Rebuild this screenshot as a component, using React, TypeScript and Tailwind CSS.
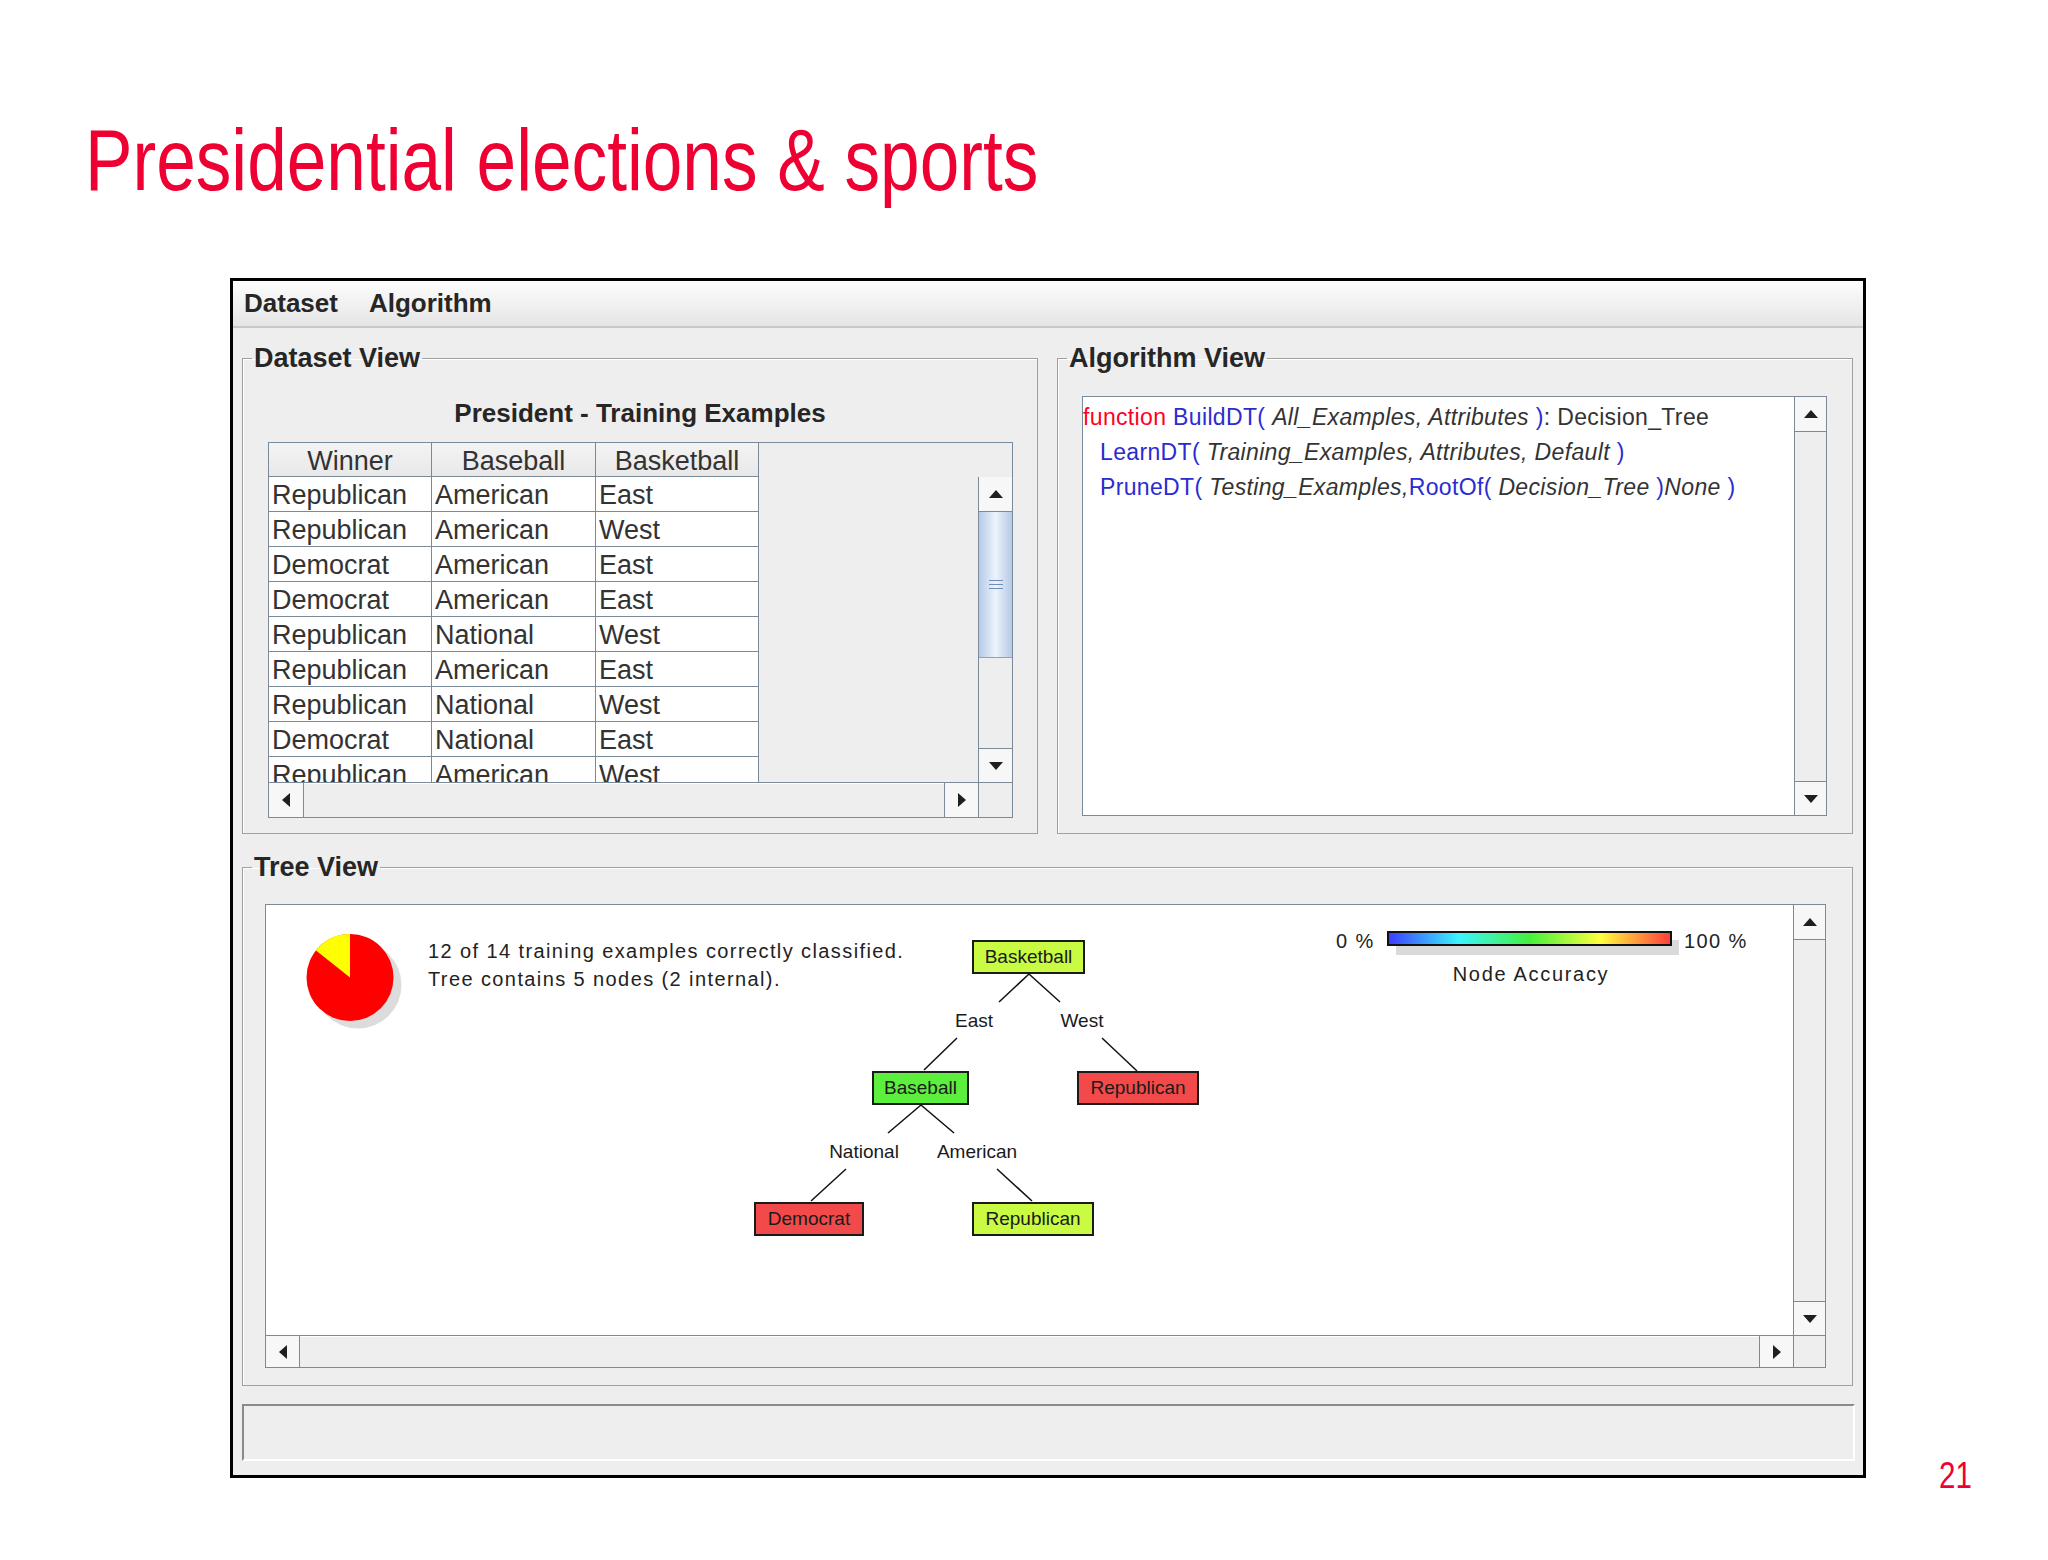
import React from "react";

type Dir = "up" | "down" | "left" | "right";

const rows = [
  ["Republican", "American", "East"],
  ["Republican", "American", "West"],
  ["Democrat", "American", "East"],
  ["Democrat", "American", "East"],
  ["Republican", "National", "West"],
  ["Republican", "American", "East"],
  ["Republican", "National", "West"],
  ["Democrat", "National", "East"],
  ["Republican", "American", "West"],
];

const colWidths = ["w-[163px]", "w-[164px]", "w-[163px]"];

function Arrow({ dir }: { dir: Dir }) {
  const vertical = dir === "up" || dir === "down";
  const pts = {
    up: "0,8 7,0 14,8",
    down: "0,0 14,0 7,8",
    left: "8,0 8,14 0,7",
    right: "0,0 8,7 0,14",
  }[dir];
  return (
    <svg width={vertical ? 14 : 8} height={vertical ? 8 : 14} viewBox={vertical ? "0 0 14 8" : "0 0 8 14"}>
      <polygon points={pts} fill="#1f1f1f" />
    </svg>
  );
}

function ScrollButton({ dir, className }: { dir: Dir; className: string }) {
  return (
    <div className={`flex items-center justify-center bg-[#f7f7f7] border-[#7a8a99] shrink-0 ${className}`}>
      <Arrow dir={dir} />
    </div>
  );
}

function Group({ title, className, children }: { title: string; className: string; children: React.ReactNode }) {
  return (
    <fieldset className={`border border-[#a0a0a0] shadow-[inset_1px_1px_0_#ffffff] min-w-0 ${className}`}>
      <legend className="ml-[9px] px-[2px] text-[27px] leading-[32px] font-bold text-[#262626]">{title}</legend>
      {children}
    </fieldset>
  );
}

function DatasetView() {
  return (
    <Group title="Dataset View" className="w-[796px] h-full">
      <div className="mt-[24px] text-center text-[26px] leading-[30px] font-bold text-[#262626]">
        President - Training Examples
      </div>
      <div className="mt-[14px] ml-[25px] w-[745px] h-[376px] border border-[#7a8a99] flex flex-col text-[27px] text-[#333]">
        <div className="flex h-[34px] shrink-0">
          {["Winner", "Baseball", "Basketball"].map((h, i) => (
            <div
              key={h}
              className={`${colWidths[i]} h-full border-r border-b border-[#7a8a99] bg-gradient-to-b from-[#f4f4f4] to-[#e8e8e8] text-center leading-[36px]`}
            >
              {h}
            </div>
          ))}
          <div className="flex-1 bg-[#eeeeee]" />
        </div>
        <div className="flex h-[305px] shrink-0">
          {/* last row is cut by the viewport, as in the app */}
          <div className="flex-1 bg-[#eeeeee] overflow-hidden">
            {rows.map((r, ri) => (
              <div key={ri} className="flex h-[35px]">
                {r.map((c, ci) => (
                  <div
                    key={ci}
                    className={`${colWidths[ci]} h-full bg-white border-r border-b border-[#7a8a99] pl-[3px] leading-[37px] overflow-hidden`}
                  >
                    {c}
                  </div>
                ))}
              </div>
            ))}
          </div>
          <div className="w-[34px] flex flex-col border-l border-[#7a8a99] bg-[#eeeeee]">
            <ScrollButton dir="up" className="h-[35px] border-b" />
            <div className="h-[146px] border-b border-[#8aa3c4] bg-gradient-to-r from-[#b4cae6] via-[#ecf3fc] to-[#b4cae6] flex flex-col items-center justify-center gap-[3px]">
              <div className="w-[14px] h-[1px] bg-[#6f8db5]" />
              <div className="w-[14px] h-[1px] bg-[#6f8db5]" />
              <div className="w-[14px] h-[1px] bg-[#6f8db5]" />
            </div>
            <div className="flex-1" />
            <ScrollButton dir="down" className="h-[34px] border-t" />
          </div>
        </div>
        <div className="flex h-[35px] shrink-0 border-t border-[#7a8a99]">
          <div className="flex-1 flex bg-[#eeeeee]">
            <ScrollButton dir="left" className="w-[35px] border-r" />
            <div className="flex-1 border-t border-white" />
            <ScrollButton dir="right" className="w-[34px] border-l" />
          </div>
          <div className="w-[34px] border-l border-[#7a8a99] bg-[#eeeeee]" />
        </div>
      </div>
    </Group>
  );
}

function AlgorithmView() {
  const blue = "text-[#2b2bd0]";
  const red = "text-[#ff0022]";
  const arg = "italic text-[#333]";
  return (
    <Group title="Algorithm View" className="w-[796px] h-full">
      <div className="mt-[22px] ml-[24px] w-[745px] h-[420px] border border-[#7a8a99] flex bg-white">
        <div className="flex-1 pt-[3px] text-[23px] leading-[35px] tracking-[0.35px] text-[#333] whitespace-pre">
          <div>
            <span className={red}>function </span>
            <span className={blue}>BuildDT( </span>
            <span className={arg}>All_Examples, Attributes </span>
            <span className={blue}>)</span>
            <span>: Decision_Tree</span>
          </div>
          <div className="pl-[17px]">
            <span className={blue}>LearnDT( </span>
            <span className={arg}>Training_Examples, Attributes, Default </span>
            <span className={blue}>)</span>
          </div>
          <div className="pl-[17px]">
            <span className={blue}>PruneDT( </span>
            <span className={arg}>Testing_Examples,</span>
            <span className={blue}>RootOf( </span>
            <span className={arg}>Decision_Tree </span>
            <span className={blue}>)</span>
            <span className={arg}>None </span>
            <span className={blue}>)</span>
          </div>
        </div>
        <div className="w-[32px] flex flex-col border-l border-[#7a8a99] bg-[#eeeeee]">
          <ScrollButton dir="up" className="h-[35px] border-b" />
          <div className="flex-1" />
          <ScrollButton dir="down" className="h-[34px] border-t" />
        </div>
      </div>
    </Group>
  );
}

type TreeNode = { label: string; x: number; y: number; w: number; fill: string };

const nodes: TreeNode[] = [
  { label: "Basketball", x: 706, y: 35, w: 113, fill: "bg-[#c8fb42]" },
  { label: "Baseball", x: 606, y: 166, w: 97, fill: "bg-[#5cef3e]" },
  { label: "Republican", x: 811, y: 166, w: 122, fill: "bg-[#f24a4a]" },
  { label: "Democrat", x: 488, y: 297, w: 110, fill: "bg-[#f24a4a]" },
  { label: "Republican", x: 706, y: 297, w: 122, fill: "bg-[#c8fb42]" },
];

const edgeLabels = [
  { label: "East", x: 708, y: 115 },
  { label: "West", x: 816, y: 115 },
  { label: "National", x: 598, y: 246 },
  { label: "American", x: 711, y: 246 },
];

const edges = [
  [763, 69, 733, 97],
  [763, 69, 794, 97],
  [691, 133, 658, 165],
  [836, 133, 871, 166],
  [655, 200, 622, 228],
  [655, 200, 688, 228],
  [580, 264, 545, 296],
  [731, 264, 766, 296],
];

function TreeCanvas() {
  return (
    <div className="relative flex-1 bg-white overflow-hidden text-[#1a1a1a]">
      <svg className="absolute left-0 top-0" width="1527" height="430">
        <defs>
          <linearGradient id="acc" x1="0" x2="1" y1="0" y2="0">
            <stop offset="0" stopColor="#3c3cff" />
            <stop offset="0.25" stopColor="#3cf4ff" />
            <stop offset="0.5" stopColor="#44f03c" />
            <stop offset="0.75" stopColor="#ffff40" />
            <stop offset="1" stopColor="#ff3c3c" />
          </linearGradient>
        </defs>
        <circle cx="92" cy="80" r="43.5" fill="#dcdcdc" />
        <circle cx="84" cy="72.5" r="43.5" fill="#ff0000" />
        <path d="M84,72.5 L84,29 A43.5,43.5 0 0 0 50,45.4 Z" fill="#ffff00" />
        {edges.map((e, i) => (
          <line key={i} x1={e[0]} y1={e[1]} x2={e[2]} y2={e[3]} stroke="#111" strokeWidth="1.5" />
        ))}
        <rect x="1130" y="35" width="283" height="15" fill="#dadada" />
        <rect x="1122" y="27" width="283" height="13" fill="url(#acc)" stroke="#111" strokeWidth="2" />
      </svg>

      <div className="absolute left-[162px] top-[32px] text-[20px] leading-[28px] tracking-[1.4px] text-[#222]">
        <div>12 of 14 training examples correctly classified.</div>
        <div>Tree contains 5 nodes (2 internal).</div>
      </div>

      {nodes.map((n, i) => (
        <div
          key={i}
          className={`absolute h-[34px] border-2 border-[#1a1a1a] flex items-center justify-center text-[19px] ${n.fill}`}
          style={{ left: n.x, top: n.y, width: n.w }}
        >
          {n.label}
        </div>
      ))}

      {edgeLabels.map((l) => (
        <div
          key={l.label}
          className="absolute -translate-x-1/2 -translate-y-1/2 text-[19px] leading-[19px]"
          style={{ left: l.x, top: l.y }}
        >
          {l.label}
        </div>
      ))}

      <div className="absolute left-[1070px] top-[26px] text-[20px] leading-[20px] tracking-[1.4px] text-[#222]">0 %</div>
      <div className="absolute left-[1418px] top-[26px] text-[20px] leading-[20px] tracking-[1.4px] text-[#222]">100 %</div>
      <div className="absolute left-[1265px] top-[69px] -translate-x-1/2 -translate-y-1/2 text-[20px] leading-[20px] tracking-[1.7px] text-[#222]">
        Node Accuracy
      </div>
    </div>
  );
}

function TreeView() {
  return (
    <Group title="Tree View" className="mt-[17px] w-[1611px] h-[535px]">
      <div className="mt-[21px] ml-[22px] w-[1561px] h-[464px] border border-[#7a8a99] flex flex-col">
        <div className="flex h-[430px] shrink-0">
          <TreeCanvas />
          <div className="w-[32px] flex flex-col border-l border-[#7a8a99] bg-[#eeeeee]">
            <ScrollButton dir="up" className="h-[35px] border-b" />
            <div className="flex-1" />
            <ScrollButton dir="down" className="h-[34px] border-t" />
          </div>
        </div>
        <div className="flex h-[32px] shrink-0 border-t border-[#7a8a99]">
          <div className="flex-1 flex bg-[#eeeeee]">
            <ScrollButton dir="left" className="w-[34px] border-r" />
            <div className="flex-1 border-t border-white" />
            <ScrollButton dir="right" className="w-[34px] border-l" />
          </div>
          <div className="w-[32px] border-l border-[#7a8a99] bg-[#eeeeee]" />
        </div>
      </div>
    </Group>
  );
}

function Window() {
  return (
    <div className="ml-[230px] w-[1636px] h-[1200px] shrink-0 border-[3px] border-black bg-[#eeeeee] flex flex-col">
      <div className="h-[47px] shrink-0 border-b-2 border-[#c8c8c8] bg-gradient-to-b from-[#fdfdfd] via-[#f1f1f1] to-[#e5e5e5] flex items-center pl-[11px] gap-[31px] text-[26px] font-bold text-[#262626]">
        <span>Dataset</span>
        <span>Algorithm</span>
      </div>
      <div className="px-[9px] flex flex-col">
        <div className="mt-[14px] h-[492px] flex gap-[19px]">
          <DatasetView />
          <AlgorithmView />
        </div>
        <TreeView />
        <div className="mt-[18px] w-[1613px] h-[57px] border-2 border-t-[#8a8a8a] border-l-[#8a8a8a] border-b-white border-r-white bg-[#eeeeee]" />
      </div>
    </div>
  );
}

export default function App() {
  return (
    <div className="w-[2048px] h-[1560px] bg-white overflow-hidden font-['Liberation_Sans',Arial,sans-serif]">
      <div className="pl-[85px] pt-[116px]">
        <h1 className="inline-block origin-left scale-x-[0.818] whitespace-nowrap text-[87px] leading-[87px] text-[#ee0033]">
          Presidential elections &amp; sports
        </h1>
      </div>
      <div className="mt-[75px] flex">
        <Window />
        <div className="self-end ml-[73px] -mb-[16px] origin-left scale-x-[0.82] text-[36px] leading-[36px] text-[#ee0033]">
          21
        </div>
      </div>
    </div>
  );
}
